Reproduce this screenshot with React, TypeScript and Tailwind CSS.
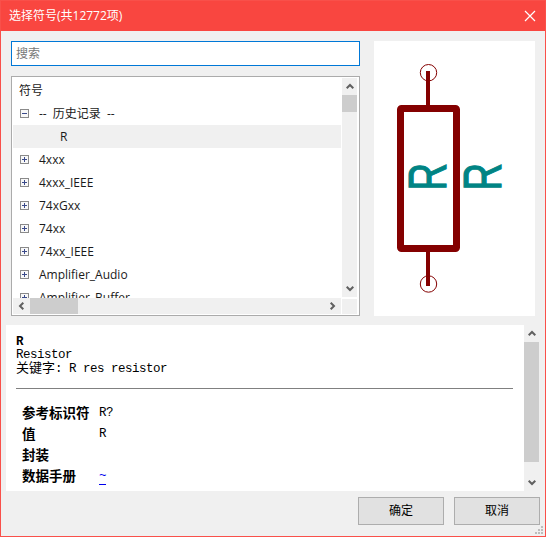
const ui = { fontFamily: '"Open Sans","Noto Sans CJK SC",sans-serif' };

function Chevron({ dir }: { dir: "up" | "down" | "left" | "right" }) {
  const d = {
    up: "M0.7 5.3 L4 2 L7.3 5.3",
    down: "M0.7 1.7 L4 5 L7.3 1.7",
    left: "M5.3 0.7 L2 4 L5.3 7.3",
    right: "M1.7 0.7 L5 4 L1.7 7.3",
  }[dir];
  const vert = dir === "up" || dir === "down";
  return (
    <svg width={vert ? 8 : 7} height={vert ? 7 : 8} viewBox={vert ? "0 0 8 7" : "0 0 7 8"}>
      <path d={d} fill="none" stroke="#606060" strokeWidth="2" />
    </svg>
  );
}

function Box({ open }: { open?: boolean }) {
  return (
    <svg width="9" height="9" viewBox="0 0 9 9" className="shrink-0">
      <rect x="0.5" y="0.5" width="8" height="8" fill="#f8f8f8" stroke="#8a8a8a" />
      <path d={open ? "M2 4.5H7" : "M2 4.5H7M4.5 2V7"} stroke="#3a4a8a" strokeWidth="1" />
    </svg>
  );
}

function Row({ label, open }: { label: string; open?: boolean }) {
  return (
    <div className="h-[23px] shrink-0 flex items-center pl-[7px]">
      <Box open={open} />
      <span className={open ? "ml-[10px] text-[12px] text-[#1a1a1a] whitespace-pre [word-spacing:3px]" : "ml-[10px] text-[12px] text-[#1a1a1a] whitespace-pre"}>{label}</span>
    </div>
  );
}

const mono = { fontFamily: '"Liberation Mono","Noto Sans CJK SC",monospace' };

function Field({ k, v, link }: { k: string; v: string; link?: boolean }) {
  return (
    <div className="h-[21px] flex items-center">
      <span className="w-[77px] shrink-0 font-bold text-[13.5px] text-black" style={{ fontFamily: '"Noto Sans CJK SC",sans-serif' }}>{k}</span>
      <span className={link ? "pt-[2px] text-[12.5px] tracking-[-0.5px] text-[#0000ee] underline underline-offset-[5px]" : "pt-[2px] text-[12.5px] tracking-[-0.5px] text-black"}>{v}</span>
    </div>
  );
}

function Preview() {
  return (
    <svg width="161" height="275" viewBox="0 0 161 275" className="block">
      <circle cx="54.5" cy="31.7" r="8.2" fill="none" stroke="#840000" strokeWidth="1" />
      <circle cx="54.5" cy="243" r="8.2" fill="none" stroke="#840000" strokeWidth="1" />
      <path d="M54 30V68M54 207V245" stroke="#840000" strokeWidth="4" fill="none" />
      <rect x="26.5" y="67.5" width="56" height="140" rx="1" fill="none" stroke="#840000" strokeWidth="7" />
      <text transform="translate(71.5 149.5) rotate(-90) scale(0.72 1)" fontFamily='"Liberation Sans",sans-serif' fontSize="53" fill="#008484" stroke="#008484" strokeWidth="1.2">R</text>
      <text transform="translate(127 149.5) rotate(-90) scale(0.72 1)" fontFamily='"Liberation Sans",sans-serif' fontSize="53" fill="#008484" stroke="#008484" strokeWidth="1.2">R</text>
    </svg>
  );
}

export default function App() {
  return (
    <div className="relative w-[546px] h-[537px] flex flex-col bg-[#f0f0f0] border border-[#f9504a] overflow-hidden" style={ui}>
      <div className="h-[30px] shrink-0 bg-[#f94640] flex items-center justify-between pl-[8px] pr-[9px] text-white text-[12px]">
        <span>选择符号(共12772项)</span>
        <svg width="12" height="12" viewBox="0 0 12 12">
          <path d="M1 1L11 11M11 1L1 11" stroke="#fff" strokeWidth="1.2" />
        </svg>
      </div>
      <div className="flex-1 flex flex-col min-h-0">
        <div className="flex pl-[10px] pt-[10px] h-[285px] shrink-0">
          <div className="w-[349px] flex flex-col">
            <div className="h-[25px] shrink-0 border border-[#0078d7] bg-white flex items-center pl-[4px] text-[12px] text-[#777]">搜索</div>
            <div className="mt-[10px] h-[240px] border border-[#ababab] bg-white pt-[1px] pb-[1px] pl-[1px] pr-[2px] grid grid-cols-[1fr_15px] grid-rows-[1fr_16px] gap-x-[1px]">
              <div className="overflow-hidden">
                <div className="h-[24px] flex items-center pl-[6px] pt-[1px] text-[12px] text-[#1a1a1a]">符号</div>
                <div className="flex flex-col">
                  <Row label="-- 历史记录 --" open />
                  <div className="h-[23px] bg-[#f0f0f0] flex items-center pl-[47px] text-[12px] text-[#1a1a1a]">R</div>
                  {["4xxx", "4xxx_IEEE", "74xGxx", "74xx", "74xx_IEEE", "Amplifier_Audio", "Amplifier_Buffer"].map((l) => (
                    <Row key={l} label={l} />
                  ))}
                </div>
              </div>
              <div className="bg-[#f0f0f0] flex flex-col mb-[1px]">
                <div className="h-[17px] flex items-center justify-center"><Chevron dir="up" /></div>
                <div className="h-[17px] bg-[#cdcdcd]" />
                <div className="flex-1" />
                <div className="h-[17px] flex items-center justify-center"><Chevron dir="down" /></div>
              </div>
              <div className="bg-[#f0f0f0] flex items-center justify-between">
                <div className="flex items-center h-full">
                  <div className="w-[17px] flex justify-center"><Chevron dir="left" /></div>
                  <div className="w-[48px] h-full bg-[#cdcdcd]" />
                </div>
                <div className="w-[17px] flex justify-center"><Chevron dir="right" /></div>
              </div>
              <div className="bg-[#f0f0f0] mt-[1px]" />
            </div>
          </div>
          <div className="ml-[14px] w-[161px] h-[275px] bg-white">
            <Preview />
          </div>
        </div>
        <div className="mt-[9px] ml-[5px] h-[166px] w-[533px] flex shrink-0">
          <div className="flex-1 bg-white pl-[10px] pr-[11px] pt-[11px] text-black leading-[13px] text-[12.5px] tracking-[-0.5px]" style={mono}>
            <div className="font-bold">R</div>
            <div>Resistor</div>
            <div><span className="text-[13px] tracking-normal">关键字</span>: R res resistor</div>
            <div className="mt-[12px] h-px bg-[#808080]" />
            <div className="mt-[13px] pl-[6px] tracking-normal">
              <Field k="参考标识符" v="R?" />
              <Field k="值" v="R" />
              <Field k="封装" v="" />
              <Field k="数据手册" v="~" link />
            </div>
          </div>
          <div className="w-[15px] bg-[#f0f0f0] flex flex-col">
            <div className="h-[17px] flex items-center justify-center"><Chevron dir="up" /></div>
            <div className="h-[120px] bg-[#cdcdcd]" />
            <div className="flex-1" />
            <div className="h-[17px] flex items-center justify-center"><Chevron dir="down" /></div>
          </div>
        </div>
        <div className="flex justify-end gap-[10px] pr-[5px] mt-[6px]">
          <button className="w-[86px] h-[28px] bg-[#e1e1e1] border border-[#adadad] text-[12px] text-black">确定</button>
          <button className="w-[86px] h-[28px] bg-[#e1e1e1] border border-[#adadad] text-[12px] text-black">取消</button>
        </div>
      </div>
      <svg width="8" height="8" viewBox="0 0 8 8" className="absolute right-[2px] bottom-[2px]">
        <path d="M6 0h2v2H6zM3 3h2v2H3zM6 3h2v2H6zM0 6h2v2H0zM3 6h2v2H3zM6 6h2v2H6z" fill="#bdbdbd" />
      </svg>
    </div>
  );
}
